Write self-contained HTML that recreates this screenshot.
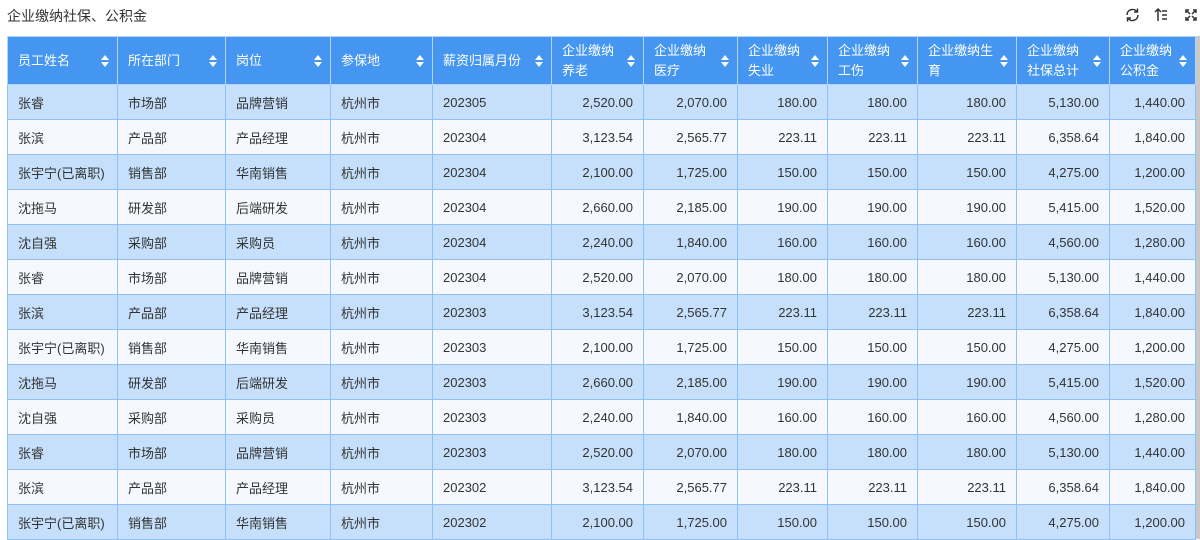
<!DOCTYPE html>
<html><head><meta charset="utf-8"><style>
*{margin:0;padding:0;box-sizing:border-box}
body{width:1200px;height:539px;overflow:hidden;background:#fff;font-family:"Liberation Sans","Noto Sans CJK SC",sans-serif;color:#333;position:relative}
.title{position:absolute;left:7px;top:6px;font-size:14px;color:#333}
.icons{position:absolute;top:5px;right:-2px}
.sb{position:absolute;right:0;top:36px;width:5px;height:503px;background:#c8c8c8}
table{position:absolute;left:7px;top:36px;border-collapse:collapse;table-layout:fixed;font-size:13px}
td,th{border:1px solid #8ec1f4;padding:0 10px;white-space:nowrap}
th{background:#4496f0;color:#fff;font-weight:normal;text-align:left;height:48px;position:relative;line-height:20px;border-color:#b5d5f8}
th span.s{position:absolute;right:8px;top:50%;margin-top:-6px;width:8px;height:12px}
th span.s:before{content:"";position:absolute;left:0;top:0;border-left:4px solid transparent;border-right:4px solid transparent;border-bottom:5px solid #fff}
th span.s:after{content:"";position:absolute;left:0;top:7px;border-left:4px solid transparent;border-right:4px solid transparent;border-top:5px solid #fff}
td{height:35px}
tr.a td{background:#c6e0fb}
tr.b td{background:#f5f9fe}
td.n{text-align:right}
</style></head><body>
<div class="title">企业缴纳社保、公积金</div>
<svg class="icons" width="80" height="20" viewBox="0 0 80 20">
<g fill="none" stroke="#333" stroke-width="1.5">
<path d="M5 10a5.5 5.5 0 0 1 10-3.2M16 10a5.5 5.5 0 0 1-10 3.2"/><path d="M15.5 3.5v3.5h-3.5M5.5 16.5v-3.5h3.5"/>
<path d="M36 16V4M33 7l3-3 3 3M40 6h5M40 10h5M40 14h5"/>
<path d="M64 8V5h3M71 5h3v3M74 12v3h-3M67 15h-3v-3M65 6l3 3M73 6l-3 3M65 14l3-3M73 14l-3-3"/>
</g></svg>
<div class="sb"></div>
<table>
<colgroup><col style="width:110px"><col style="width:108px"><col style="width:105px"><col style="width:102px"><col style="width:119px"><col style="width:92px"><col style="width:94px"><col style="width:90px"><col style="width:90px"><col style="width:99px"><col style="width:93px"><col style="width:86px"></colgroup>
<tr><th>员工姓名<span class="s"></span></th><th>所在部门<span class="s"></span></th><th>岗位<span class="s"></span></th><th>参保地<span class="s"></span></th><th>薪资归属月份<span class="s"></span></th><th>企业缴纳<br>养老<span class="s"></span></th><th>企业缴纳<br>医疗<span class="s"></span></th><th>企业缴纳<br>失业<span class="s"></span></th><th>企业缴纳<br>工伤<span class="s"></span></th><th>企业缴纳生<br>育<span class="s"></span></th><th>企业缴纳<br>社保总计<span class="s"></span></th><th>企业缴纳<br>公积金<span class="s"></span></th></tr>
<tr class="a"><td>张睿</td><td>市场部</td><td>品牌营销</td><td>杭州市</td><td>202305</td><td class="n">2,520.00</td><td class="n">2,070.00</td><td class="n">180.00</td><td class="n">180.00</td><td class="n">180.00</td><td class="n">5,130.00</td><td class="n">1,440.00</td></tr>
<tr class="b"><td>张滨</td><td>产品部</td><td>产品经理</td><td>杭州市</td><td>202304</td><td class="n">3,123.54</td><td class="n">2,565.77</td><td class="n">223.11</td><td class="n">223.11</td><td class="n">223.11</td><td class="n">6,358.64</td><td class="n">1,840.00</td></tr>
<tr class="a"><td>张宇宁(已离职)</td><td>销售部</td><td>华南销售</td><td>杭州市</td><td>202304</td><td class="n">2,100.00</td><td class="n">1,725.00</td><td class="n">150.00</td><td class="n">150.00</td><td class="n">150.00</td><td class="n">4,275.00</td><td class="n">1,200.00</td></tr>
<tr class="b"><td>沈拖马</td><td>研发部</td><td>后端研发</td><td>杭州市</td><td>202304</td><td class="n">2,660.00</td><td class="n">2,185.00</td><td class="n">190.00</td><td class="n">190.00</td><td class="n">190.00</td><td class="n">5,415.00</td><td class="n">1,520.00</td></tr>
<tr class="a"><td>沈自强</td><td>采购部</td><td>采购员</td><td>杭州市</td><td>202304</td><td class="n">2,240.00</td><td class="n">1,840.00</td><td class="n">160.00</td><td class="n">160.00</td><td class="n">160.00</td><td class="n">4,560.00</td><td class="n">1,280.00</td></tr>
<tr class="b"><td>张睿</td><td>市场部</td><td>品牌营销</td><td>杭州市</td><td>202304</td><td class="n">2,520.00</td><td class="n">2,070.00</td><td class="n">180.00</td><td class="n">180.00</td><td class="n">180.00</td><td class="n">5,130.00</td><td class="n">1,440.00</td></tr>
<tr class="a"><td>张滨</td><td>产品部</td><td>产品经理</td><td>杭州市</td><td>202303</td><td class="n">3,123.54</td><td class="n">2,565.77</td><td class="n">223.11</td><td class="n">223.11</td><td class="n">223.11</td><td class="n">6,358.64</td><td class="n">1,840.00</td></tr>
<tr class="b"><td>张宇宁(已离职)</td><td>销售部</td><td>华南销售</td><td>杭州市</td><td>202303</td><td class="n">2,100.00</td><td class="n">1,725.00</td><td class="n">150.00</td><td class="n">150.00</td><td class="n">150.00</td><td class="n">4,275.00</td><td class="n">1,200.00</td></tr>
<tr class="a"><td>沈拖马</td><td>研发部</td><td>后端研发</td><td>杭州市</td><td>202303</td><td class="n">2,660.00</td><td class="n">2,185.00</td><td class="n">190.00</td><td class="n">190.00</td><td class="n">190.00</td><td class="n">5,415.00</td><td class="n">1,520.00</td></tr>
<tr class="b"><td>沈自强</td><td>采购部</td><td>采购员</td><td>杭州市</td><td>202303</td><td class="n">2,240.00</td><td class="n">1,840.00</td><td class="n">160.00</td><td class="n">160.00</td><td class="n">160.00</td><td class="n">4,560.00</td><td class="n">1,280.00</td></tr>
<tr class="a"><td>张睿</td><td>市场部</td><td>品牌营销</td><td>杭州市</td><td>202303</td><td class="n">2,520.00</td><td class="n">2,070.00</td><td class="n">180.00</td><td class="n">180.00</td><td class="n">180.00</td><td class="n">5,130.00</td><td class="n">1,440.00</td></tr>
<tr class="b"><td>张滨</td><td>产品部</td><td>产品经理</td><td>杭州市</td><td>202302</td><td class="n">3,123.54</td><td class="n">2,565.77</td><td class="n">223.11</td><td class="n">223.11</td><td class="n">223.11</td><td class="n">6,358.64</td><td class="n">1,840.00</td></tr>
<tr class="a"><td>张宇宁(已离职)</td><td>销售部</td><td>华南销售</td><td>杭州市</td><td>202302</td><td class="n">2,100.00</td><td class="n">1,725.00</td><td class="n">150.00</td><td class="n">150.00</td><td class="n">150.00</td><td class="n">4,275.00</td><td class="n">1,200.00</td></tr>
</table>
</body></html>
